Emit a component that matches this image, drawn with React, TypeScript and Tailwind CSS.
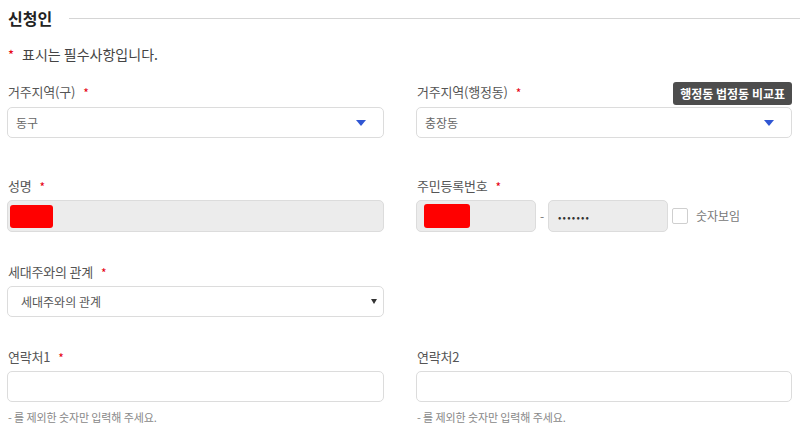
import React from "react";

const FONT = { fontFamily: '"Noto Sans CJK KR", "Noto Sans", sans-serif' };

function Star() {
  return <span className="text-[#e60012] ml-[8px] text-[12px] relative top-[1px]">*</span>;
}

function Label({ text, req }: { text: string; req?: boolean }) {
  return (
    <div className="h-[20px] leading-[20px] text-[13px] text-[#555] pl-[1px] whitespace-nowrap tracking-[-0.2px]">
      {text}
      {req && <Star />}
    </div>
  );
}

function BlueArrow() {
  return (
    <svg width="10" height="6" viewBox="0 0 10 6" className="shrink-0">
      <path d="M0 0 H10 L5 6 Z" fill="#3056d3" />
    </svg>
  );
}

function Helper() {
  return (
    <div className="mt-[6px] h-[18px] leading-[18px] text-[11px] tracking-[-0.1px] text-[#888] pl-[1px] whitespace-nowrap">
      - 를 제외한 숫자만 입력해 주세요.
    </div>
  );
}

export default function App() {
  return (
    <div style={FONT} className="w-[800px] h-[441px] bg-white overflow-hidden pl-[7px] pt-[6px]">
      <div className="flex items-center h-[24px]">
        <div className="text-[16px] font-bold text-[#222] ml-[1px] leading-[24px]">신청인</div>
        <div className="flex-1 h-px bg-[#d5d5d5] ml-[17px]" />
      </div>
      <div className="mt-[14px] h-[20px] leading-[20px] text-[14px] text-[#444] pl-[1px] flex items-center">
        <span className="text-[#e60012] text-[13px] relative top-[1px] mr-[8px]">*</span>
        표시는 필수사항입니다.
      </div>

      <div className="mt-[18px] w-[785px] grid grid-cols-[377px_376px] gap-x-[32px]">
        {/* Row 1 */}
        <div className="mb-[38px]">
          <Label text="거주지역(구)" req />
          <div className="mt-[5px] h-[31px] border border-[#dcdcdc] rounded-[5px] bg-white flex items-center justify-between pl-[8px] pr-[17px]">
            <span className="text-[12px] text-[#666]">동구</span>
            <BlueArrow />
          </div>
        </div>
        <div className="mb-[38px]">
          <div className="h-[20px] flex items-end justify-between">
            <div className="leading-[20px] text-[13px] text-[#555] pl-[1px] whitespace-nowrap tracking-[-0.2px]">
              거주지역(행정동)
              <Star />
            </div>
            <div className="h-[23px] mb-[-3px] px-[7px] bg-[#4d4d4d] rounded-[3px] text-white text-[12px] font-bold flex items-center whitespace-nowrap">
              행정동 법정동 비교표
            </div>
          </div>
          <div className="mt-[5px] h-[31px] border border-[#dcdcdc] rounded-[5px] bg-white flex items-center justify-between pl-[8px] pr-[17px]">
            <span className="text-[12px] text-[#666]">충장동</span>
            <BlueArrow />
          </div>
        </div>

        {/* Row 2 */}
        <div className="mb-[30px]">
          <Label text="성명" req />
          <div className="mt-[4px] h-[32px] border border-[#dcdcdc] rounded-[5px] bg-[#ececec] flex items-center pl-[2px]">
            <div className="w-[43px] h-[23px] bg-[#ff0000] rounded-[3px]" />
          </div>
        </div>
        <div className="mb-[30px]">
          <Label text="주민등록번호" req />
          <div className="mt-[4px] flex items-center">
            <div className="w-[120px] h-[32px] border border-[#dcdcdc] rounded-[5px] bg-[#ececec] flex items-center pl-[7px]">
              <div className="w-[46px] h-[24px] bg-[#ff0000] rounded-[3px]" />
            </div>
            <div className="w-[12px] text-center text-[12px] text-[#777]">-</div>
            <div className="w-[120px] h-[32px] border border-[#dcdcdc] rounded-[5px] bg-[#ececec] flex items-center pl-[9px]">
              <span className="text-[10px] text-[#333] tracking-[1.2px]">•••••••</span>
            </div>
            <div className="ml-[4px] w-[16px] h-[16px] border border-[#cfcfcf] rounded-[2px] bg-white" />
            <span className="ml-[8px] text-[12px] text-[#777]">숫자보임</span>
          </div>
        </div>

        {/* Row 3 */}
        <div className="mb-[30px]">
          <Label text="세대주와의 관계" req />
          <div className="mt-[4px] h-[31px] border border-[#dcdcdc] rounded-[5px] bg-white flex items-center justify-between pl-[13px] pr-[6px]">
            <span className="text-[12px] text-[#555]">세대주와의 관계</span>
            <svg width="6" height="5" viewBox="0 0 6 5">
              <path d="M0 0 H6 L3 5 Z" fill="#333" />
            </svg>
          </div>
        </div>
        <div className="mb-[30px]" />

        {/* Row 4 */}
        <div>
          <Label text="연락처1" req />
          <div className="mt-[4px] h-[31px] border border-[#dcdcdc] rounded-[5px] bg-white" />
          <Helper />
        </div>
        <div>
          <Label text="연락처2" />
          <div className="mt-[4px] h-[31px] border border-[#dcdcdc] rounded-[5px] bg-white" />
          <Helper />
        </div>
      </div>
    </div>
  );
}
